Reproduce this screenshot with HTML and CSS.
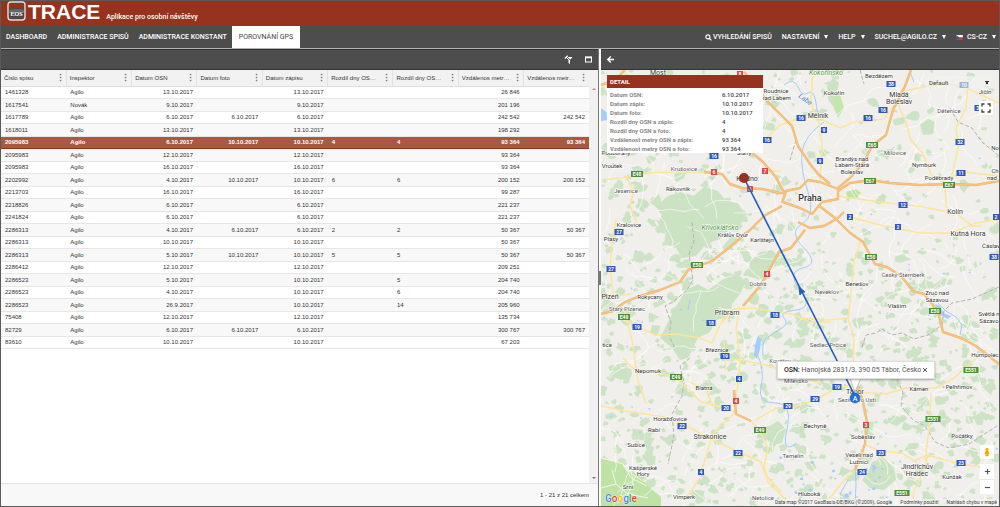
FILE: index.html
```html
<!DOCTYPE html>
<html lang="cs">
<head>
<meta charset="utf-8">
<title>TRACE</title>
<link rel="stylesheet" href="styles.css">
</head>
<body>
<div class="app">
  <header class="brand">
    <svg class="brand-logo" viewBox="0 0 20 20" aria-hidden="true">
      <rect x="1" y="1" width="17" height="18" rx="3" fill="#4a4848" stroke="#e9dcd8" stroke-width="1.4"/>
      <path d="M2 8V4q0-2 2-2h11q2 0 2 2v4Q9 6 2 8z" fill="#96321d"/>
      <path d="M2 9q8-2 15 0v3H2z" fill="#6a6666"/>
      <text x="9.500" y="15" class="logo-text">EOS</text>
    </svg>
    <h1 class="brand-name">TRACE</h1>
    <span class="brand-sub">Aplikace pro osobní návštěvy</span>
  </header>
  <nav class="nav">
    <a class="nav-item" href="#">DASHBOARD</a>
    <a class="nav-item" href="#">ADMINISTRACE SPISŮ</a>
    <a class="nav-item" href="#">ADMINISTRACE KONSTANT</a>
    <a class="nav-item active" href="#">POROVNÁNÍ GPS</a>
    <div class="nav-right">
      <button class="menu"><svg class="ico-search" viewBox="0 0 8 8" aria-hidden="true"><circle cx="3.300" cy="3.300" r="2.300" fill="none" stroke="#fff" stroke-width="1.300"/><path d="M5 5l2.300 2.300" stroke="#fff" stroke-width="1.500"/></svg>VYHLEDÁNÍ SPISŮ</button>
      <button class="menu">NASTAVENÍ<span class="caret"></span></button>
      <button class="menu">HELP<span class="caret"></span></button>
      <button class="menu">SUCHEL@AGILO.CZ<span class="caret"></span></button>
      <button class="menu"><svg class="ico-flag" viewBox="0 0 8 6" aria-hidden="true"><rect width="8" height="3" fill="#fff"/><rect y="3" width="8" height="3" fill="#d7352c"/><path d="M0 0l4 3-4 3z" fill="#2b5896"/></svg>CS-CZ<span class="caret"></span></button>
    </div>
  </nav>
  <main class="split">
    <section class="grid-panel">
      <div class="toolbar grid-tools">
        <button class="tool" aria-label="Zrušit filtr"><svg viewBox="0 0 9 9"><path d="M1.500 2h7L6 5v4L4.500 8V5z" fill="#fff"/><path d="M2 1l7 6.500" stroke="#4d4d4d" stroke-width="1"/><path d="M.8 3.500l3-2.800" stroke="#fff" stroke-width="1.200"/></svg></button>
        <button class="tool" aria-label="Maximalizovat"><svg viewBox="0 0 9 9"><rect x="1.500" y="2" width="6" height="5" fill="none" stroke="#fff"/><path d="M1 2.500h7" stroke="#fff" stroke-width="1.500"/></svg></button>
      </div>
      <div class="grid-wrap">
        <table class="grid">
          <thead><tr>
            <th><span class="th">Číslo spisu</span></th><th><span class="th">Inspektor</span></th><th><span class="th">Datum OSN</span></th><th><span class="th">Datum foto</span></th><th><span class="th">Datum zápisu</span></th><th><span class="th">Rozdíl dny OS…</span></th><th><span class="th">Rozdíl dny OS…</span></th><th><span class="th">Vzdálenos metr…</span></th><th><span class="th">Vzdálenos metr…</span></th>
          </tr></thead>
          <tbody>
            <tr><td>1461328</td><td>Agilo</td><td>13.10.2017</td><td></td><td>13.10.2017</td><td></td><td></td><td>26 846</td><td></td></tr>
            <tr><td>1617541</td><td>Novák</td><td>9.10.2017</td><td></td><td>9.10.2017</td><td></td><td></td><td>201 196</td><td></td></tr>
            <tr><td>1617789</td><td>Agilo</td><td>6.10.2017</td><td>6.10.2017</td><td>6.10.2017</td><td></td><td></td><td>242 542</td><td>242 542</td></tr>
            <tr><td>1618011</td><td>Agilo</td><td>13.10.2017</td><td></td><td>13.10.2017</td><td></td><td></td><td>198 292</td><td></td></tr>
            <tr class="selected"><td>2095983</td><td>Agilo</td><td>6.10.2017</td><td>10.10.2017</td><td>10.10.2017</td><td>4</td><td>4</td><td>93 364</td><td>93 364</td></tr>
            <tr><td>2095983</td><td>Agilo</td><td>12.10.2017</td><td></td><td>12.10.2017</td><td></td><td></td><td>93 364</td><td></td></tr>
            <tr><td>2095983</td><td>Agilo</td><td>16.10.2017</td><td></td><td>16.10.2017</td><td></td><td></td><td>93 364</td><td></td></tr>
            <tr><td>2202992</td><td>Agilo</td><td>4.10.2017</td><td>10.10.2017</td><td>10.10.2017</td><td>6</td><td>6</td><td>200 152</td><td>200 152</td></tr>
            <tr><td>2213703</td><td>Agilo</td><td>16.10.2017</td><td></td><td>16.10.2017</td><td></td><td></td><td>99 287</td><td></td></tr>
            <tr><td>2218826</td><td>Agilo</td><td>6.10.2017</td><td></td><td>6.10.2017</td><td></td><td></td><td>221 237</td><td></td></tr>
            <tr><td>2241824</td><td>Agilo</td><td>6.10.2017</td><td></td><td>6.10.2017</td><td></td><td></td><td>221 237</td><td></td></tr>
            <tr><td>2286313</td><td>Agilo</td><td>4.10.2017</td><td>6.10.2017</td><td>6.10.2017</td><td>2</td><td>2</td><td>50 367</td><td>50 367</td></tr>
            <tr><td>2286313</td><td>Agilo</td><td>10.10.2017</td><td></td><td>10.10.2017</td><td></td><td></td><td>50 367</td><td></td></tr>
            <tr><td>2286313</td><td>Agilo</td><td>5.10.2017</td><td>10.10.2017</td><td>10.10.2017</td><td>5</td><td>5</td><td>50 367</td><td>50 367</td></tr>
            <tr><td>2286412</td><td>Agilo</td><td>12.10.2017</td><td></td><td>12.10.2017</td><td></td><td></td><td>209 251</td><td></td></tr>
            <tr><td>2286523</td><td>Agilo</td><td>5.10.2017</td><td></td><td>10.10.2017</td><td></td><td>5</td><td>204 740</td><td></td></tr>
            <tr><td>2286523</td><td>Agilo</td><td>4.10.2017</td><td></td><td>10.10.2017</td><td></td><td>6</td><td>204 740</td><td></td></tr>
            <tr><td>2286523</td><td>Agilo</td><td>26.9.2017</td><td></td><td>10.10.2017</td><td></td><td>14</td><td>205 960</td><td></td></tr>
            <tr><td>75408</td><td>Agilo</td><td>12.10.2017</td><td></td><td>12.10.2017</td><td></td><td></td><td>135 734</td><td></td></tr>
            <tr><td>82729</td><td>Agilo</td><td>6.10.2017</td><td>6.10.2017</td><td>6.10.2017</td><td></td><td></td><td>300 767</td><td>300 767</td></tr>
            <tr><td>83610</td><td>Agilo</td><td>10.10.2017</td><td></td><td>10.10.2017</td><td></td><td></td><td>67 203</td><td></td></tr>
          </tbody>
        </table>
        <div class="scrollbar"><span class="arrow up"></span><span class="arrow down"></span></div>
      </div>
      <footer class="pager">1 - 21 z 21 celkem</footer>
    </section>
    <div class="splitter"><span class="handle"></span></div>
    <section class="map-panel">
      <div class="toolbar">
        <button class="tool back" aria-label="Zpět"><svg viewBox="0 0 9 9"><path d="M8 4.500H2M4.800 1.500l-3 3 3 3" fill="none" stroke="#fff" stroke-width="1.500"/></svg></button>
      </div>
      <div class="map">
        <svg class="map-canvas" viewBox="601 70 398 436" preserveAspectRatio="xMidYMid slice" role="img" aria-label="Mapa">
          <rect x="601" y="70" width="398" height="437" fill="#f1efeb"/>
          <g id="woods" fill="#cde3c5"></g>
          <g fill="#cbe2c3">
            <path d="M668 196l12-4 14 4 10-9 14 4 8 10 12 2 6 10-4 12-12 4-8 10-14 5-10 12-14 2-6-10-12-4 2-12-8-8 4-10-6-8z"/>
            <path d="M686 290l12-6 10 6 14-10 16-6 8 8-6 12-8 10-2 12-14 4-6 12-12 6-10 20-8 2-8-12-12-10 6-12 8-16z"/>
            <path d="M750 262l10-10 12-2 6 6-8 14-10 10-12-4z"/>
            <path d="M768 427l10-6 8 8-4 14-10 2-6-8z"/>
            <path d="M872 462l12-4 10 10 2 12-12 10-14-2-8-8 6-8z"/>
            <path d="M920 125l8-6 7 3-2 12-10 1zM827 86l6-8 6 5-2 9 4 8-6 8-7-8z"/>
          </g>
          <path d="M601 458l12 3 8 2 6 8 12 4 10 12 12 10v10H601z" fill="#bfe3a6"/>
          <path d="M601 458l12 3 10 3 8 14 16 8M612 470l4 14-15 4M616 484l12 10 20 4" fill="none" stroke="#f3f6e6" stroke-width="1"/>
          <path d="M834 90l6 4 4 14-6 10-5-12z" fill="#c4e7ac"/>
          <path d="M846 192l10-3 5 4-4 5-9 1z" fill="#bfe3a6"/>
          <g id="lanes" fill="none" stroke="#fff" stroke-width=".8" opacity=".8"></g>
          <g id="ponds" fill="#a3ccff"></g>
          <g class="river">
            <path d="M784 85q10-8 14 2t10 6 8 10 4 12"/>
            <path d="M824 122q-20 14-22 30t6 40-6 32 2 24-1 20-3 22-4 20-12 8-5 12-14 10-2 16"/>
            <path d="M757 353q8 18 4 34t14 16 12 26 10 14"/>
            <path d="M938 303l8 8 10 6 6 8-2 10"/>
            <path d="M855 464q2 20 0 42M848 480l-8 14M910 72l4 10M690 300l-2 10"/>
          </g>
          <path d="M935 304l4 2 6 8 6 2-3 3-8-4zM758 336l3 3-1 10-3 10-3-4 1-10zM601 108l5 4 2 8-7 1z" fill="#a3ccff"/>
          <g class="district">
            <path d="M692 222l2 20-5 12 4 26-6 10-14 12-8 4 6 16-2 14 6 12"/>
            <path d="M862 347l4-12 10-2 6-4 10 6 10-2 12 6 14-4 14-10 2-14 8-8 20-4 27-12"/>
            <path d="M897 380l6 12-2 14 12 14 12 6 10 16 14 6 20-4 28-18"/>
            <path d="M690 358l-10 8 4 16-2 14-10 18 2 22-6 28"/>
            <path d="M950 108l8 14 14 6 10 14 17 14M796 140l-6 20M860 70l4 14"/>
          </g>
          <g class="road">
            <path d="M601 180l20-2 26-5 30-1 27 0M620 70l12 8M626 178l8 12-4 16 8 20M616 220l-4 20-2 30 4 28M601 298l30-4"/>
            <path d="M624 310l8 30 6 40 8 24M622 318l16 9 18 8 20-1 24 4 12 5 8-18 14-16 20-1 20 4 18 2 18 8 20 0M724 341l2 30"/>
            <path d="M740 308l-4 20 4 30-1 22-4 20M730 311l-8 10"/>
            <path d="M623 358l10 10 14 4 26 4 18 16 10 10 26 7M690 382l16 8 6 14 24 8M601 406l30 6 40 6 16 8 22 12 30 14 22 10 4 12 16 18M712 436l-6 20-6 22-14 20"/>
            <path d="M736 412l-18 16-8 10M752 422l8 10 8 16-4 18 4 16 20 20M756 420l20-12 20-2 20-6 20-12 20-4M856 392l30 2 20-6 30 0 18-10 20-18 12-10"/>
            <path d="M720 358l20 2 30 6 22 8 30 10M860 242l-6 20-4 40-2 16 6 20-2 50M848 318l-20 2-26-2"/>
            <path d="M866 445l14 6 22 2 12 8 14-6 28 8 25 4M925 460l4-30 2-36M928 455l-6 20-8 16-2 14M855 470l-14 14-16 20"/>
            <path d="M818 118l4 26-1 20-1 16M818 118l22 10 14-6 30-3 20-28 40-8 20 4 35 16M760 145l20-20 20-7 18 0M815 118l-4-18 2-30"/>
            <path d="M897 102l8 18 6 20 12 14 8 20 14 10 1 20 4 12M968 84l-2 24-10 20 2 20-6 28M940 182l24-10 35 4M838 196l20 3 30 4 30 3 30 6M850 217l30 8 40 8 32 0 24-10 23-4M952 210l20 16 10 0"/>
            <path d="M732 153l10-14 20-1 5 0M765 171l16 0"/>
          </g>
          <g class="trunk-edge">
            <path id="d8" d="M744 72l14 16 8 12 14 14 12 12 6 20 12 18 8 10 12 10"/>
            <path id="d10" d="M911 70l-6 16-5 10-7 14-7 25-14 11-8 16-14 16-12 10"/>
            <path id="d11" d="M838 191l12-8 20-3 20 3 30 2 32-1 24 1 23-4"/>
            <path id="d1" d="M818 205l17 13 14 14 14 10 12 22 12 3 14 9 12 15 11 3 9 11 6 10 4 17 18 6 15 8 23 18"/>
            <path id="d5" d="M601 314l12-3 12-9 15-6 20-6 20-8 8-12 24-9 18-14 20-17 14-14 18-10"/>
            <path id="d4" d="M805 230l-8 10-6 8-12 4-12 22-7 12-17 20"/>
            <path id="d6" d="M704 172l18 2 8 10 12 4 20 1 18 4 5 0M751 152l12 10 12 14 9 16"/>
            <path id="d3" d="M858 386l5 16 4 20-2 22-10 26M734 390l2 24 15 7"/>
            <path id="ring" d="M782 203l4-12 14-3 8-8 12 2 18 7v10l-16 3-10 12-12-6-17-6M798 222l12 6 14-2 14-8 6-6M601 85l14-5 10-10"/>
          </g>
          <g class="trunk">
            <use href="#d8"/><use href="#d10"/><use href="#d11"/><use href="#d1"/><use href="#d5"/><use href="#d4"/><use href="#d6"/><use href="#d3"/><use href="#ring"/>
          </g>
          <g id="shields"></g>
          <g class="park-name"><text x="826" y="75">Kokořínsko</text><text x="720" y="230">Křivoklátsko</text></g>
          <g class="water-name"><text x="0" y="0" transform="translate(798 97) rotate(36)">Labe</text></g>
          <g class="places">
            <text x="658" y="75" class="town">Most</text><text x="879" y="78">Bezdězem</text><text x="834" y="95">Kokořín</text>
            <text x="776" y="93">Roudnice</text><text x="776" y="100">nad Labem</text>
            <text x="899" y="97" class="town">Mladá</text><text x="899" y="104" class="town">Boleslav</text>
            <text x="818" y="118" class="town">Mělník</text><text x="985" y="94">Jičín</text><text x="949" y="113" class="small">Dětenice</text>
            <text x="895" y="155" class="small">Milovice</text><text x="852" y="161">Brandýs nad</text><text x="852" y="167">Labem-Stará</text><text x="852" y="174">Boleslav</text>
            <text x="924" y="167">Nymburk</text><text x="939" y="180">Poděbrady</text><text x="810" y="201" class="capital">Praha</text>
            <text x="955" y="214" class="town">Kolín</text><text x="968" y="236" class="town">Kutná Hora</text><text x="991" y="248">Čáslav</text>
            <text x="995" y="150">No</text><text x="995" y="173">Ch</text><text x="992" y="180">nad</text>
            <text x="629" y="227">Kralovice</text><text x="611" y="241">Plasy</text><text x="733" y="237">Králův Dvůr</text><text x="762" y="242">Karlštejn</text>
            <text x="684" y="171" class="small">Krušovice</text><text x="678" y="191">Rakovník</text><text x="626" y="193" class="small">Jesenice</text><text x="612" y="168">Vroutek</text>
            <text x="616" y="155">Podbořany</text><text x="744" y="155">Slaný</text><text x="747" y="181" class="town">Kladno</text>
            <text x="610" y="299" class="town">Plzeň</text><text x="650" y="299">Rokycany</text><text x="627" y="311" class="small">Starý Plzenec</text>
            <text x="758" y="286" class="small">Dobříš</text><text x="727" y="315" class="town">Příbram</text><text x="717" y="352">Březnice</text>
            <text x="857" y="286">Benešov</text><text x="827" y="294" class="small">Neveklov</text><text x="903" y="277" class="small">Český Šternberk</text>
            <text x="937" y="295">Zruč nad</text><text x="937" y="302">Sázavou</text><text x="897" y="308">Vlašim</text><text x="989" y="316">Světlá n</text><text x="989" y="323">Sázavo</text>
            <text x="828" y="347" class="small">Sedlec-Prčice</text><text x="985" y="357">Humpolec</text><text x="648" y="373">Nepomuk</text><text x="704" y="390">Blatná</text>
            <text x="780" y="363" class="small">Kovářov</text><text x="796" y="383" class="small">Milevsko</text><text x="670" y="421">Horažďovice</text><text x="654" y="432">Rabí</text>
            <text x="636" y="447">Sušice</text><text x="710" y="439" class="town">Strakonice</text><text x="643" y="470">Kašperské</text><text x="643" y="476">Hory</text>
            <text x="628" y="489">Srní</text><text x="684" y="499">Vimperk</text><text x="763" y="500" class="small">Netolice</text><text x="793" y="458" class="small">Temelín</text>
            <text x="855" y="394" class="town">Tábor</text><text x="857" y="402" class="small">Sezimovo Ústí</text><text x="919" y="391">Kámen</text><text x="959" y="389">Pelhřimov</text>
            <text x="815" y="428">Bechyně</text><text x="863" y="439">Soběslav</text><text x="962" y="438">Počátky</text><text x="859" y="457">Veselí nad</text><text x="859" y="464">Lužnicí</text>
            <text x="917" y="469" class="town">Jindřichův</text><text x="917" y="476" class="town">Hradec</text><text x="952" y="479">Kunžak</text>
            <text x="809" y="496">Hluboká</text><text x="607" y="347">tice</text>
          </g>
          <path d="M744 178L856 398" stroke="#1f5dc4" stroke-width="1.600"/>
          <path d="M799 287l6 5-3 0-2 3z" fill="#1f5dc4" stroke="#1f5dc4"/>
          <circle cx="744" cy="178" r="5" fill="#96321d"/>
          <path d="M850 378l5 14 6-14z" fill="#fff" stroke="#aaa" stroke-width=".6"/>
          <circle cx="855" cy="398" r="5" fill="#1f6fd6" stroke="#2361b5" stroke-width=".6"/>
          <text x="855" y="401" class="pin-letter">A</text>
        </svg>

        <aside class="detail">
          <h2>DETAIL</h2>
          <dl>
            <dt>Datum OSN:</dt><dd>6.10.2017</dd>
            <dt>Datum zápis:</dt><dd>10.10.2017</dd>
            <dt>Datum foto:</dt><dd>10.10.2017</dd>
            <dt>Rozdíl dny OSN a zápis:</dt><dd>4</dd>
            <dt>Rozdíl dny OSN a foto:</dt><dd>4</dd>
            <dt>Vzdálenost metry OSN a zápis:</dt><dd>93 364</dd>
            <dt>Vzdálenost metry OSN a foto:</dt><dd>93 364</dd>
          </dl>
        </aside>
        <select class="map-style" aria-label="Styl mapy"><option>Default</option></select>
        <button class="map-btn fullscreen" aria-label="Celá obrazovka"><svg viewBox="0 0 10 10"><path d="M1 3.500V1h2.500M6.500 1H9v2.500M9 6.500V9H6.500M3.500 9H1V6.500" fill="none" stroke="#444" stroke-width="1.400"/></svg></button>
        <div class="infobox"><span><b>OSN:</b> Hanojská 2831/3, 390 05 Tábor, Česko</span><button class="close" aria-label="Zavřít"><svg viewBox="0 0 6 6"><path d="M1 1l4 4M5 1L1 5" stroke="#555" stroke-width="1"/></svg></button></div>
        <div class="map-controls">
          <button class="map-btn" aria-label="Street View"><svg viewBox="0 0 10 12"><circle cx="5" cy="3" r="2" fill="#f5b400"/><path d="M3 5h4l1 3-1 .5V11H3V8.500L2 8z" fill="#f5b400"/><path d="M3.500 5.500h3L5 7z" fill="#b9791a"/></svg></button>
          <div class="zoom">
            <button aria-label="Přiblížit"><svg viewBox="0 0 8 8"><path d="M1 4h6M4 1v6" stroke="#555" stroke-width="1.400"/></svg></button>
            <button aria-label="Oddálit"><svg viewBox="0 0 8 8"><path d="M1 4h6" stroke="#555" stroke-width="1.400"/></svg></button>
          </div>
        </div>
        <div class="google"><span class="b">G</span><span class="r">o</span><span class="y">o</span><span class="b">g</span><span class="g">l</span><span class="r">e</span></div>
        <div class="credits"><span>Data map ©2017 GeoBasis-DE/BKG (©2009), Google</span><a href="#">Podmínky použití</a><a href="#">Nahlásit chybu v mapě</a></div>
      </div>
    </section>
  </main>
</div>
<script src="map.js"></script>
</body>
</html>
```
FILE: styles.css
```css
* { box-sizing: border-box; }
body { margin: 0; font-family: Roboto, "Liberation Sans", sans-serif; font-size: 6px; color: #333; }
button { border: 0; padding: 0; background: none; font: inherit; color: inherit; }
svg { display: block; }
a { color: inherit; text-decoration: none; }

.app { display: flex; flex-direction: column; height: 100vh; border: 1px solid #5a5a5a; background: #fff; }

.brand { display: flex; height: 25px; flex: none; padding-left: 6px; background: #96321d; color: #fff; }
.brand-logo { width: 20px; height: 20px; }
.logo-text { font: bold 6px "Liberation Serif", serif; fill: #fff; text-anchor: middle; }
.brand-name { margin: 0; padding-left: 1px; font: bold 21px/22px "Liberation Sans", sans-serif; }
.brand-sub { padding: 11px 0 0 6px; font-size: 7px; line-height: 10px; font-weight: 500; }

.nav { display: flex; flex: none; height: 22px; background: #4d4d4d; color: #fff; font-size: 7px; font-weight: 500; line-height: 22px; }
.nav-item { padding: 0 5px; }
.nav-item.active { background: #fff; color: #444; padding: 0 7px; font-weight: 400; }
.nav-right { display: flex; gap: 10px; margin-left: auto; padding-right: 3px; }
.menu { display: flex; align-items: center; }
.caret { margin-left: 5px; border: 2px solid transparent; border-top: 4px solid #fff; border-bottom: 0; }
.ico-search { width: 7px; height: 7px; margin-right: 1px; }
.ico-flag { width: 7px; height: 5px; margin-right: 4px; }

.split { display: flex; flex: 1; min-height: 0; border-top: 1px solid #b0b0b0; }
.grid-panel { display: flex; flex-direction: column; flex: 597; min-width: 0; }
.map-panel { display: flex; flex-direction: column; flex: 398; min-width: 0; }
.splitter { display: flex; align-items: center; width: 3px; border-left: 1px solid #777; background: #fff; }
.handle { width: 2px; height: 14px; background: #777; }

.toolbar { display: flex; flex: none; align-items: center; height: 21px; background: #4d4d4d; border: 1px solid #333; border-width: 1px 0; }
.grid-tools { justify-content: flex-end; gap: 11px; padding-right: 5px; }
.tool { width: 9px; height: 9px; }
.back { margin-left: 5px; }

.grid-wrap { display: flex; flex: 1; min-height: 0; align-items: stretch; }
.grid { flex: 1; align-self: flex-start; border-collapse: collapse; table-layout: fixed; width: 100%; font-family: "Liberation Sans", sans-serif; line-height: 10px; }
.grid th { height: 16px; padding: 0 5px 0 3px; background: #f2f2f2; border-left: 1px solid #e2e2e2; border-bottom: 1px solid #ddd; font-weight: 400; text-align: left; }
.grid th:first-child { border-left: 0; }
.th { display: flex; justify-content: space-between; align-items: center; white-space: nowrap; }
.th::after { content: "⋮"; width: 5px; font-size: 9px; font-weight: 700; color: #777; text-align: center; }
.grid td { height: 12px; padding: 0 4px; border-bottom: 1px solid #e6e6e6; white-space: nowrap; }
.grid tr:nth-child(even) td { height: 13px; background: #f8f8f8; }
.grid td:nth-child(3), .grid td:nth-child(4), .grid td:nth-child(5), .grid td:nth-child(8), .grid td:nth-child(9) { text-align: right; }
.grid .selected td { background: #ab5745; border-top: 1px solid #96321d; border-bottom: 1px solid #96321d; color: #fff; font-weight: 700; }
.scrollbar { display: flex; flex: none; flex-direction: column; justify-content: space-between; align-items: center; width: 9px; padding: 18px 0 4px; background: #f1f1f1; }
.arrow { border: 2px solid transparent; }
.up { border-bottom-color: #999; border-top: 0; }
.down { border-top-color: #777; border-bottom: 0; }
.pager { flex: none; height: 23px; padding-right: 9px; background: #f8f8f8; border-top: 1px solid #e2e2e2; font-family: "Liberation Sans", sans-serif; line-height: 22px; text-align: right; }

.map { position: relative; flex: 1; min-height: 0; overflow: hidden; }
.map-canvas { width: 100%; height: 100%; }
.river { fill: none; stroke: #a3ccff; stroke-width: 1; }
.district { fill: none; stroke: #b3b3b3; stroke-width: 1; stroke-dasharray: 4 2; }
.road { fill: none; stroke: #fbe59a; stroke-width: 1.5; stroke-linejoin: round; }
.trunk-edge { fill: none; stroke: #edb571; stroke-width: 2.4; stroke-linejoin: round; }
.trunk { fill: none; stroke-width: 1.4; stroke-linejoin: round; }
.trunk use { stroke: #fac27a; stroke-width: 1.4; }
.places { font-size: 6px; fill: #333; text-anchor: middle; paint-order: stroke; stroke: #fff; stroke-width: 1; }
.places .small { fill: #555; }
.places .town { font-size: 7px; }
.places .capital { font-size: 9px; font-weight: 500; }
.park-name { font-size: 7px; font-style: italic; fill: #4a9a35; text-anchor: middle; paint-order: stroke; stroke: #fff; stroke-width: 1; }
.water-name { font-size: 7px; font-style: italic; fill: #4f87d6; }
.shield { font-size: 5px; font-weight: 700; fill: #fff; text-anchor: middle; }
.pin-letter { font-size: 7px; font-weight: 500; fill: #fff; text-anchor: middle; }

.detail { position: absolute; left: 6px; top: 5px; width: 156px; background: #fff; line-height: 9px; }
.detail h2 { margin: 0; padding-left: 3px; background: #96321d; color: #fff; font-size: 6px; line-height: 13px; font-weight: 700; }
.detail dl { display: grid; grid-template-columns: 112px 1fr; margin: 0; padding: 2px 0 0 3px; }
.detail dt { color: #888; font-weight: 700; }
.detail dd { margin: 0; color: #444; font-weight: 500; }

.map-style { position: absolute; right: 6px; top: 6px; width: 68px; height: 13px; padding: 0 4px; border: 0; background: rgba(240, 240, 238, .6) conic-gradient(from -30deg at 50% 100%, #333 60deg, transparent 0) no-repeat 60px 5px / 4px 4px; font: 6px Roboto, sans-serif; color: #444; appearance: none; }
.map-btn { display: flex; align-items: center; justify-content: center; width: 14px; height: 14px; background: #fff; }
.fullscreen { position: absolute; right: 6px; top: 31px; }
.map-btn svg { width: 10px; height: 10px; }
.infobox { position: absolute; left: 176px; top: 291px; display: flex; align-items: center; justify-content: space-between; width: 158px; height: 18px; padding: 0 6px; background: #fff; border: 1px solid #ddd; color: #555; font-size: 7px; white-space: nowrap; box-shadow: 0 1px 2px #0005; }
.infobox b { color: #222; font-weight: 500; }
.close svg { width: 6px; height: 6px; }
.map-controls { position: absolute; right: 5px; bottom: 12px; display: flex; flex-direction: column; gap: 5px; }
.zoom { display: flex; flex-direction: column; width: 14px; background: #fff; }
.zoom button { display: flex; align-items: center; justify-content: center; height: 15px; }
.zoom button + button { border-top: 1px solid #e6e6e6; }
.zoom svg { width: 7px; height: 7px; }
.google { position: absolute; left: 4px; bottom: 0; font-size: 10px; line-height: 14px; font-weight: 500; text-shadow: 0 0 1px #fff, 0 0 1px #fff; }
.b { color: #4285f4; } .r { color: #ea4335; } .y { color: #fbbc05; } .g { color: #34a853; }
.credits { position: absolute; right: 0; bottom: 0; display: flex; gap: 8px; padding: 0 2px; background: rgba(245, 245, 245, .7); font-size: 5px; line-height: 7px; color: #444; white-space: nowrap; }
```
FILE: map.js
```js
const NS = "http://www.w3.org/2000/svg";
let seed = 7;
const rnd = () => (seed = (seed * 16807) % 2147483647) / 2147483647;

function add(parent, tag, attrs, text) {
  const el = document.createElementNS(NS, tag);
  for (const k in attrs) el.setAttribute(k, attrs[k]);
  if (text) el.textContent = text;
  parent.appendChild(el);
}

function blob(cx, cy, r) {
  const n = 9;
  let d = "";
  for (let i = 0; i < n; i++) {
    const a = (i / n) * Math.PI * 2;
    const q = r * (0.45 + rnd() * 0.8);
    d += (i ? "L" : "M") + (cx + Math.cos(a) * q * 1.2).toFixed(1) + " " + (cy + Math.sin(a) * q).toFixed(1);
  }
  return d + "z";
}

const woods = document.getElementById("woods");
let wd = "";
for (let i = 0; i < 1500; i++) {
  const x = 601 + rnd() * 398;
  const y = 70 + rnd() * 437;
  const plain = y < 250 && x > 750;
  if (plain && rnd() < 0.75) continue;
  wd += blob(x, y, 1.5 + rnd() * rnd() * 6);
}
add(woods, "path", { d: wd });

let ld = "";
for (let i = 0; i < 240; i++) {
  let x = 601 + rnd() * 398;
  let y = 70 + rnd() * 437;
  let a = rnd() * 6.28;
  ld += "M" + x.toFixed(1) + " " + y.toFixed(1);
  for (let j = 0; j < 6; j++) {
    a += (rnd() - 0.5) * 1.3;
    x += Math.cos(a) * 7;
    y += Math.sin(a) * 7;
    ld += "L" + x.toFixed(1) + " " + y.toFixed(1);
  }
}
add(document.getElementById("lanes"), "path", { d: ld });

let pd = "";
for (let i = 0; i < 45; i++) {
  pd += blob(601 + rnd() * 398, 70 + rnd() * 437, 1);
}
for (let i = 0; i < 22; i++) {
  pd += blob(775 + rnd() * 120, 455 + rnd() * 50, 1 + rnd() * 1.5);
}
add(document.getElementById("ponds"), "path", { d: pd });

const shields = {
  "#2f58c0": [["10",964,85],["38",891,84],["16",883,110],["16",868,118],["9",824,130],["16",801,118],["16",767,140],["9",820,161],["32",960,142],["11",961,173],["12",903,205],["2",850,217],["2",898,227],["16",714,156],["27",619,232],["27",611,269],["19",637,327],["18",711,323],["18",775,315],["19",725,356],["4",739,379],["20",726,408],["29",788,406],["22",682,426],["22",738,453],["4",701,472],["19",837,387],["29",815,399],["23",881,453],["24",862,472],["23",961,463],["2",996,217],["38",994,257],["35",979,108]],
  "#4c9232": [["E48",637,174],["E65",872,145],["E67",870,181],["E67",949,185],["E50",697,265],["E49",624,317],["E49",676,377],["E49",760,430],["E50",871,257],["E50",935,311],["E551",971,370],["E551",933,419],["E551",902,493]],
  "#d9474d": [["6",714,172],["7",765,171],["6",750,189],["4",767,274],["4",736,401],["3",866,425],["8",740,74]]
};
const layer = document.getElementById("shields");
for (const color in shields) {
  for (const [label, x, y] of shields[color]) {
    const w = label.length * 3 + 3;
    add(layer, "rect", { x: x - w / 2, y: y - 3, width: w, height: 6, fill: color });
    add(layer, "text", { x: x, y: y + 2, class: "shield" }, label);
  }
}
```
